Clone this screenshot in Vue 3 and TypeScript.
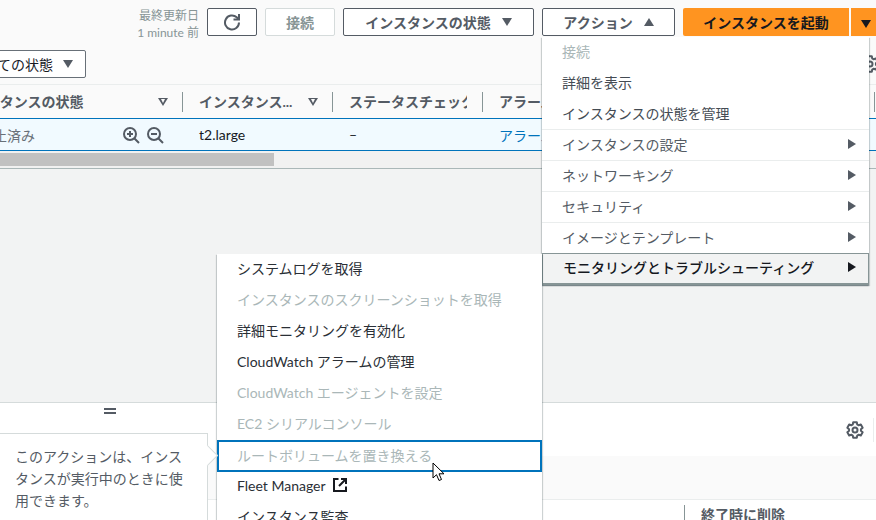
<template>
  <div class="console">
    <section class="instances">
      <div class="toolbar">
        <div class="updated">
          <div>最終更新日</div>
          <div>1 minute 前</div>
        </div>
        <button class="btn refresh" aria-label="更新">
          <svg width="18" height="18" viewBox="0 0 18 18" fill="none" stroke="#545b64" stroke-width="2">
            <path d="M16 9.500a7 7 0 1 1-2.300-5.200l2 2" />
            <path d="M16 1v5.500h-5.500" />
          </svg>
        </button>
        <button class="btn connect" disabled>接続</button>
        <button class="btn state">
          インスタンスの状態
          <span class="caret down"></span>
        </button>
        <button class="btn actions">
          アクション
          <span class="caret up"></span>
        </button>
        <div class="launch">
          <button class="launch-main">インスタンスを起動</button>
          <button class="launch-more" aria-label="その他"><span class="caret down dark"></span></button>
        </div>
      </div>

      <div class="filter-row">
        <button class="btn filter">
          すべての状態
          <span class="caret down"></span>
        </button>
        <svg class="table-gear" width="18" height="18" viewBox="0 0 18 18" fill="none" stroke="#545b64" stroke-width="2" stroke-linejoin="round">
          <circle cx="9" cy="9" r="2.5" />
          <path :d="gearPath" />
        </svg>
      </div>

      <div class="table-head">
        <div class="th th-state">
          <span class="th-label">インスタンスの状態</span>
          <span class="sort"></span>
        </div>
        <div class="th th-type">
          <span class="th-label">インスタンス...</span>
          <span class="sort"></span>
        </div>
        <div class="th th-check">
          <span class="th-label clip">ステータスチェック</span>
        </div>
        <div class="th th-alarm">
          <span class="th-label">アラーム</span>
        </div>
      </div>

      <div class="table-row">
        <div class="td td-state">
          <span class="stopped">停止済み</span>
          <span class="zoom-icons">
            <svg width="18" height="18" viewBox="0 0 18 18" fill="none" stroke="#545b64" stroke-width="2">
              <circle cx="8" cy="8" r="6" />
              <path d="M12.500 12.500 17 17M5 8h6M8 5v6" />
            </svg>
            <svg width="18" height="18" viewBox="0 0 18 18" fill="none" stroke="#545b64" stroke-width="2">
              <circle cx="8" cy="8" r="6" />
              <path d="M12.500 12.500 17 17M5 8h6" />
            </svg>
          </span>
        </div>
        <div class="td td-type">t2.large</div>
        <div class="td td-check">–</div>
        <div class="td td-alarm">アラームを表示</div>
      </div>

      <div class="scrollbar"><div class="thumb"></div></div>
    </section>

    <div class="gap"></div>

    <section class="details">
      <div class="handle"></div>
      <div class="details-head">
        <svg width="18" height="18" viewBox="0 0 18 18" fill="none" stroke="#545b64" stroke-width="2" stroke-linejoin="round">
          <circle cx="9" cy="9" r="2.5" />
          <path :d="gearPath" />
        </svg>
        <span class="head-divider"></span>
      </div>
      <div class="details-band"></div>
      <div class="details-cols">
        <span class="col-divider"></span>
        <span class="col-label">終了時に削除</span>
      </div>
    </section>

    <div class="menu main-menu">
      <div
        v-for="item in mainItems"
        :key="item.label"
        :class="['menu-item', { disabled: item.disabled, sub: item.sub, open: item.open }]"
      >
        <span>{{ item.label }}</span>
        <span v-if="item.sub" class="arrow"></span>
      </div>
    </div>

    <div class="menu sub-menu">
      <div
        v-for="item in subItems"
        :key="item.label"
        :class="['menu-item', { disabled: item.disabled, focused: item.focused }]"
      >
        <span>{{ item.label }}</span>
        <svg v-if="item.external" class="external" width="16" height="16" viewBox="0 0 16 16" fill="none" stroke="#16191f" stroke-width="2">
          <path d="M6.500 2H2v12h12V9.500" />
          <path d="M9 2h5v5M14 2 7 9" />
        </svg>
      </div>
    </div>

    <div class="tip">
      このアクションは、インスタンスが実行中のときに使用できます。
      <span class="tip-arrow"></span>
    </div>

    <svg class="cursor" width="14" height="20" viewBox="0 0 14 20">
      <path d="M1 1v15l3.500-3.300 2.500 5.800 2.500-1-2.500-5.700H12z" fill="#fff" stroke="#000" stroke-width="1" />
    </svg>
  </div>
</template>

<script setup lang="ts">
interface MainItem {
  label: string;
  disabled?: boolean;
  sub?: boolean;
  open?: boolean;
}

interface SubItem {
  label: string;
  disabled?: boolean;
  focused?: boolean;
  external?: boolean;
}

const mainItems: MainItem[] = [
  { label: '接続', disabled: true },
  { label: '詳細を表示' },
  { label: 'インスタンスの状態を管理' },
  { label: 'インスタンスの設定', sub: true },
  { label: 'ネットワーキング', sub: true },
  { label: 'セキュリティ', sub: true },
  { label: 'イメージとテンプレート', sub: true },
  { label: 'モニタリングとトラブルシューティング', sub: true, open: true },
];

const subItems: SubItem[] = [
  { label: 'システムログを取得' },
  { label: 'インスタンスのスクリーンショットを取得', disabled: true },
  { label: '詳細モニタリングを有効化' },
  { label: 'CloudWatch アラームの管理' },
  { label: 'CloudWatch エージェントを設定', disabled: true },
  { label: 'EC2 シリアルコンソール', disabled: true },
  { label: 'ルートボリュームを置き換える', disabled: true, focused: true },
  { label: 'Fleet Manager', external: true },
  { label: 'インスタンス監査' },
];

// six-tooth gear outline around (9, 9)
function polar(r: number, deg: number): string {
  const a = (deg * Math.PI) / 180;
  return `${(9 + r * Math.cos(a)).toFixed(2)} ${(9 + r * Math.sin(a)).toFixed(2)}`;
}

const gearPath =
  [0, 60, 120, 180, 240, 300]
    .map((t, i) => {
      const a = t - 90;
      const pts = [polar(8, a - 13), polar(8, a + 13), polar(6, a + 22), polar(6, a + 38)];
      return (i === 0 ? 'M' : 'L') + pts.join('L');
    })
    .join('') + 'Z';
</script>

<style>
html,
body {
  margin: 0;
  overflow: hidden;
}
</style>

<style scoped>
.console {
  position: relative;
  display: flex;
  flex-direction: column;
  width: 876px;
  height: 520px;
  overflow: hidden;
  background: #f2f3f3;
  color: #16191f;
  font-family: "Lato", "Noto Sans CJK JP", sans-serif;
  font-size: 14px;
}

.instances {
  flex: none;
  height: 169px;
  box-sizing: border-box;
  background: #fafafa;
  border-bottom: 1px solid #aab7b8;
}

.toolbar {
  display: flex;
  align-items: center;
  height: 28px;
  padding-top: 8px;
  width: 890px;
}

.updated {
  width: 199px;
  margin-top: 4px;
  margin-right: 8px;
  color: #879596;
  font-size: 12px;
  line-height: 17px;
  text-align: right;
}

.btn {
  display: flex;
  align-items: center;
  justify-content: center;
  box-sizing: border-box;
  height: 28px;
  padding: 0;
  border: 1px solid #545b64;
  border-radius: 2px;
  background: #fff;
  color: #545b64;
  font: inherit;
  font-weight: 700;
}

.refresh {
  width: 50px;
  margin-right: 8px;
}

.connect {
  width: 70px;
  margin-right: 8px;
  border-color: #d5dbdb;
  color: #879596;
}

.state {
  width: 191px;
  margin-right: 8px;
  gap: 11px;
}

.actions {
  width: 133px;
  margin-right: 8px;
  gap: 11px;
}

.caret {
  display: inline-block;
  width: 0;
  height: 0;
  border-left: 5.500px solid transparent;
  border-right: 5.500px solid transparent;
}

.caret.down {
  border-top: 8px solid #545b64;
}

.caret.up {
  border-bottom: 8px solid #545b64;
}

.caret.dark {
  border-top-color: #16191f;
}

.launch {
  display: flex;
  gap: 2px;
}

.launch-main,
.launch-more {
  height: 28px;
  padding: 0;
  border: none;
  background: #ff9420;
  color: #16191f;
  font: inherit;
  font-weight: 700;
}

.launch-main {
  width: 166px;
  border-radius: 2px 0 0 2px;
}

.launch-more {
  width: 30px;
}

.filter-row {
  display: flex;
  justify-content: space-between;
  align-items: center;
  height: 28px;
  margin-top: 14px;
}

.filter {
  width: 120px;
  margin-left: -34px;
  justify-content: flex-end;
  gap: 10px;
  padding-right: 12px;
  font-weight: 400;
  color: #16191f;
  border-color: #687078;
  white-space: nowrap;
}

.table-gear {
  margin-right: -3px;
}

.table-head {
  display: flex;
  box-sizing: border-box;
  height: 34px;
  margin-top: 6px;
  border-top: 1px solid #eaeded;
  color: #545b64;
  font-weight: 700;
}

.th {
  display: flex;
  align-items: center;
  justify-content: space-between;
  box-sizing: border-box;
  height: 33px;
  white-space: nowrap;
}

.th-label {
  display: block;
  margin-bottom: 2px;
}

.th::after {
  content: "";
  display: block;
  flex: none;
  width: 1px;
  height: 20px;
  background: #879596;
}

.th-state {
  flex: none;
  width: 255px;
  margin-left: -72px;
  padding-left: 30px;
}

.th-state .sort,
.th-type .sort {
  margin-left: auto;
  margin-right: 14px;
}

.th-type {
  flex: none;
  width: 150px;
  padding-left: 16px;
}

.th-check {
  flex: none;
  width: 150px;
  padding-left: 16px;
}

.clip {
  width: 118px;
  overflow: hidden;
}

.th-alarm {
  flex: none;
  width: 392px;
  padding-left: 16px;
}

.sort {
  flex: none;
  width: 0;
  height: 0;
  border-left: 5px solid transparent;
  border-right: 5px solid transparent;
  border-top: 8px solid #545b64;
  position: relative;
}

.sort::after {
  content: "";
  position: absolute;
  top: -6.500px;
  left: -2.500px;
  border-left: 2.500px solid transparent;
  border-right: 2.500px solid transparent;
  border-top: 4px solid #fafafa;
}

.table-row {
  display: flex;
  box-sizing: border-box;
  height: 33px;
  background: #f1faff;
  border-top: 1px solid #0073bb;
  border-bottom: 1px solid #0073bb;
}

.td {
  display: flex;
  align-items: center;
  box-sizing: border-box;
  white-space: nowrap;
}

.td-state {
  flex: none;
  width: 255px;
  margin-left: -72px;
  padding-left: 51px;
  justify-content: space-between;
  padding-right: 19px;
  color: #687078;
}

.zoom-icons {
  display: flex;
  gap: 6px;
}

.td-type {
  flex: none;
  width: 150px;
  padding-left: 16px;
}

.td-check {
  flex: none;
  width: 150px;
  padding-left: 16px;
}

.td-alarm {
  flex: none;
  width: 59px;
  margin-left: 16px;
  overflow: hidden;
  color: #0073bb;
}

.scrollbar {
  height: 17px;
  background: #f1f1f1;
  overflow: hidden;
}

.thumb {
  width: 274px;
  height: 13px;
  margin-top: 2px;
  background: #c1c1c1;
}

.gap {
  flex: none;
  height: 233px;
}

.details {
  flex: 1;
  position: relative;
  background: #fff;
  border-top: 1px solid #d5dbdb;
}

.handle {
  position: absolute;
  top: 5px;
  left: 104px;
  width: 12px;
  height: 2px;
  border-top: 2px solid #545b64;
  border-bottom: 2px solid #545b64;
}

.details-head {
  display: flex;
  align-items: center;
  justify-content: flex-end;
  gap: 9px;
  height: 53px;
}

.details-head svg {
  margin-top: 1px;
}

.head-divider {
  width: 1px;
  height: 24px;
  background: #eaeded;
  margin-right: 2px;
}

.details-band {
  height: 43px;
  background: #fafafa;
  border-bottom: 1px solid #eaeded;
}

.details-cols {
  display: flex;
  align-items: flex-start;
  height: 24px;
  margin-left: 684px;
  gap: 16px;
  padding-top: 5px;
  color: #545b64;
  font-weight: 700;
  white-space: nowrap;
}

.col-divider {
  width: 1px;
  height: 20px;
  background: #879596;
}

.col-label {
  line-height: 20px;
}

.menu {
  position: absolute;
  box-sizing: border-box;
  background: #fff;
  box-shadow: 0 1px 1px rgba(0, 28, 36, 0.3), 1px 1px 1px rgba(0, 28, 36, 0.15), -1px 1px 1px rgba(0, 28, 36, 0.15);
}

.main-menu {
  top: 37px;
  left: 542px;
  width: 327px;
}

.sub-menu {
  top: 254px;
  left: 217px;
  width: 325px;
}

.menu-item {
  display: flex;
  align-items: center;
  box-sizing: border-box;
  height: 31px;
  padding: 0 20px 3px;
  color: #2a2f36;
  white-space: nowrap;
}

.main-menu .menu-item {
  height: 30.670px;
  padding-bottom: 2px;
  color: #444b53;
}

.main-menu .menu-item.sub {
  justify-content: space-between;
  height: 31px;
  padding-right: 13px;
  color: #545b64;
  border-top: 1px solid #eaeded;
}

.menu-item.disabled,
.main-menu .menu-item.disabled {
  color: #aab7b8;
}

.main-menu .menu-item.open {
  height: 32px;
  background: #f2f3f3;
  color: #16191f;
  font-weight: 500;
  border: 1px solid #879596;
  border-bottom-width: 2px;
  padding: 0 12px 2px 20px;
}

.arrow {
  width: 0;
  height: 0;
  border-top: 5.500px solid transparent;
  border-bottom: 5.500px solid transparent;
  border-left: 8px solid #545b64;
}

.open .arrow {
  border-left-color: #16191f;
}

.menu-item.focused {
  height: 32px;
  margin-bottom: -1px;
  border: 2px solid #0073bb;
  padding: 0 18px 3px;
}

.external {
  margin-left: 6px;
}

.tip {
  position: absolute;
  top: 433px;
  left: -1px;
  box-sizing: border-box;
  width: 209px;
  height: 100px;
  padding: 12px 15px;
  background: #fff;
  border: 1px solid #d5dbdb;
  color: #545b64;
  line-height: 22px;
}

.tip-arrow {
  position: absolute;
  top: 14px;
  right: -8px;
  width: 14px;
  height: 14px;
  background: #fff;
  border-top: 1px solid #d5dbdb;
  border-right: 1px solid #d5dbdb;
  transform: rotate(45deg);
}

.cursor {
  position: absolute;
  top: 462px;
  left: 432px;
}
</style>
